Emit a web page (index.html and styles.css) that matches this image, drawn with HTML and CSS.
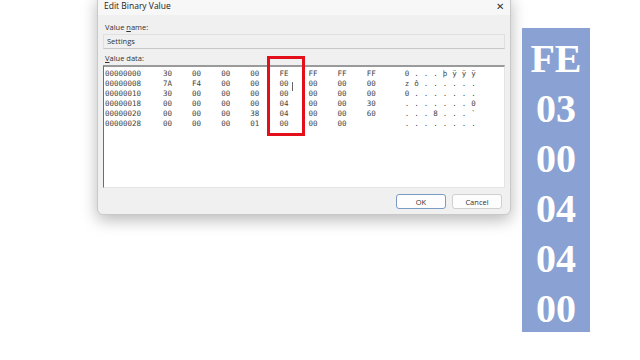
FILE: index.html
```html
<!DOCTYPE html>
<html lang="en">
<head>
    <meta charset="UTF-8">
    <title>Edit Binary Value</title>
    <link rel="stylesheet" href="styles.css">
</head>
<body>
    <div class="page">
        <div class="dialog">
            <div class="titlebar">
                <span>Edit Binary Value</span>
                <span class="close">&#x2715;</span>
            </div>
            <div class="content">
                <div class="label">Value <u>n</u>ame:</div>
                <div class="field">Settings</div>
                <div class="label"><u>V</u>alue data:</div>
                <div class="hexbox">
                    <div class="hexrow"><span>00000000</span><span>30</span><span>00</span><span>00</span><span>00</span><span>FE</span><span>FF</span><span>FF</span><span>FF</span><span class="ascii">0...þÿÿÿ</span></div>
                    <div class="hexrow"><span>00000008</span><span>7A</span><span>F4</span><span>00</span><span>00</span><span>00</span><span>00</span><span>00</span><span>00</span><span class="ascii">zô......</span></div>
                    <div class="hexrow"><span>00000010</span><span>30</span><span>00</span><span>00</span><span>00</span><span>00</span><span>00</span><span>00</span><span>00</span><span class="ascii">0.......</span></div>
                    <div class="hexrow"><span>00000018</span><span>00</span><span>00</span><span>00</span><span>00</span><span>04</span><span>00</span><span>00</span><span>30</span><span class="ascii">.......0</span></div>
                    <div class="hexrow"><span>00000020</span><span>00</span><span>00</span><span>00</span><span>38</span><span>04</span><span>00</span><span>00</span><span>60</span><span class="ascii">...8...`</span></div>
                    <div class="hexrow"><span>00000028</span><span>00</span><span>00</span><span>00</span><span>01</span><span>00</span><span>00</span><span>00</span><span></span><span class="ascii">........</span></div>
                    <div class="highlight"></div>
                    <div class="ibeam"></div>
                </div>
                <div class="buttons">
                    <button class="btn default">OK</button>
                    <button class="btn">Cancel</button>
                </div>
            </div>
        </div>
        <div class="bytes">
            <div>FE</div>
            <div>03</div>
            <div>00</div>
            <div>04</div>
            <div>04</div>
            <div>00</div>
        </div>
    </div>
</body>
</html>
```

FILE: styles.css
```css
body {
    margin: 0;
    background: #ffffff;
    font-family: "Open Sans", "Noto Sans", sans-serif;
    overflow: hidden;
}

.page {
    display: flex;
    align-items: flex-start;
    padding-left: 97px;
    height: 360px;
}

.dialog {
    width: 412px;
    margin-top: -5px;
    background: #f0f0f0;
    border: 1px solid #c9c9c9;
    border-radius: 0 0 6px 6px;
    box-shadow: 0 5px 16px rgba(0, 0, 0, 0.28);
}

.titlebar {
    height: 19px;
    display: flex;
    align-items: center;
    justify-content: space-between;
    padding: 0 6px 0 6px;
    background: #f7f7f7;
    font-size: 8.5px;
    color: #222;
}

.close {
    font-size: 10px;
    color: #333;
}

.content {
    padding: 0 5px 5px 5px;
}

.label {
    font-size: 7.5px;
    color: #333;
    height: 11px;
    line-height: 11px;
    margin-top: 7px;
    padding-left: 2px;
}

.label u {
    text-decoration-thickness: 1px;
}

.field {
    margin-top: 1px;
    height: 13px;
    line-height: 13px;
    padding-left: 3px;
    font-size: 7.5px;
    color: #333;
    background: #f0f0f0;
    border: 1px solid #e0e0e0;
    border-bottom-color: #c8c8c8;
}

.label + .hexbox {
    margin-top: 1px;
}

.content .field + .label {
    margin-top: 4px;
}

.hexbox {
    position: relative;
    height: 118px;
    background: #ffffff;
    border-top: 2px solid #9a9a9a;
    border-left: 1px solid #6d6d6d;
    border-right: 1px solid #e4e4e4;
    border-bottom: 1px solid #e4e4e4;
    padding-top: 2px;
    font-family: "DejaVu Sans Mono", monospace;
    font-size: 7.5px;
    color: #444;
}

.hexrow {
    display: grid;
    grid-template-columns: 58px repeat(7, 29.1px) 38px auto;
    height: 10px;
    line-height: 10px;
    padding-left: 1px;
}

.ascii {
    letter-spacing: 5px;
}

.highlight {
    position: absolute;
    left: 163px;
    top: -11px;
    width: 32px;
    height: 74px;
    border: 3px solid #e3101c;
}

.ibeam {
    position: absolute;
    left: 188px;
    top: 15px;
    width: 1px;
    height: 9px;
    background: #666;
}

.buttons {
    display: flex;
    justify-content: flex-end;
    gap: 6px;
    margin-top: 6px;
    padding-right: 3px;
}

.btn {
    width: 50px;
    height: 15px;
    padding: 0;
    font-family: "Open Sans", "Noto Sans", sans-serif;
    font-size: 7.5px;
    color: #333;
    background: #fdfdfd;
    border: 1px solid #d0d0d0;
    border-radius: 3px;
}

.btn.default {
    border-color: #7a9cc4;
}

.bytes {
    margin-left: 11px;
    margin-top: 28px;
    width: 68px;
    height: 298px;
    padding-top: 6px;
    background: #8aa2d3;
    color: #ffffff;
    font-family: "Liberation Serif", serif;
    font-weight: bold;
    font-size: 40px;
    line-height: 50px;
    text-align: center;
}
```
